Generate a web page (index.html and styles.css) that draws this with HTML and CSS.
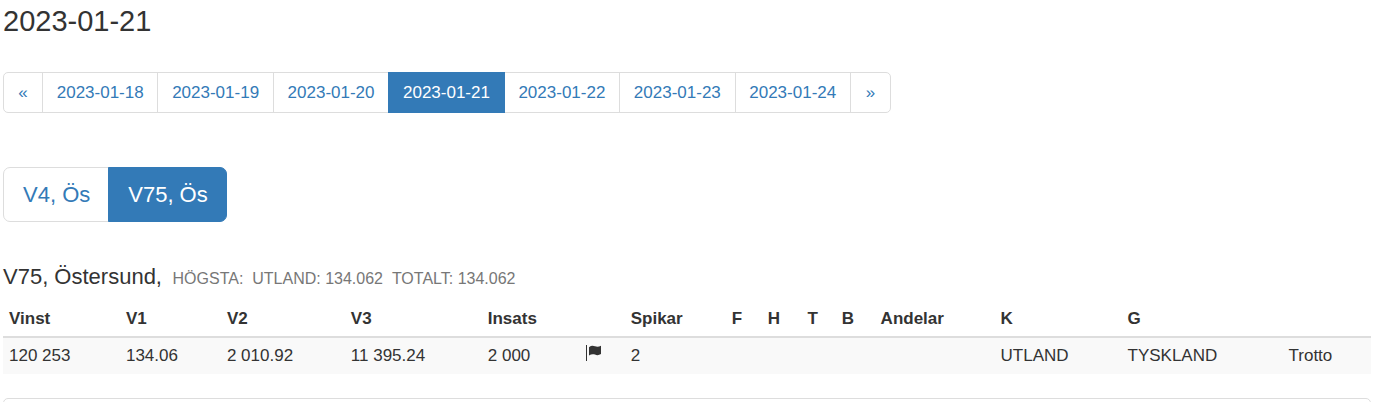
FILE: index.html
```html
<!DOCTYPE html>
<html lang="sv">
<head>
<meta charset="utf-8">
<meta name="viewport" content="width=device-width, initial-scale=1">
<title>2023-01-21</title>
<link rel="stylesheet" href="styles.css">
</head>
<body>
<main>
  <h1 class="page-title">2023-01-21</h1>

  <nav aria-label="Datum">
    <ul class="pagination days">
      <li><a href="#" aria-label="Föregående">«</a></li>
      <li><a href="#">2023-01-18</a></li>
      <li><a href="#">2023-01-19</a></li>
      <li><a href="#">2023-01-20</a></li>
      <li class="active"><a href="#" aria-current="page">2023-01-21</a></li>
      <li><a href="#">2023-01-22</a></li>
      <li><a href="#">2023-01-23</a></li>
      <li><a href="#">2023-01-24</a></li>
      <li><a href="#" aria-label="Nästa">»</a></li>
    </ul>
  </nav>

  <nav aria-label="Spel">
    <ul class="pagination games">
      <li><a href="#">V4, Ös</a></li>
      <li class="active"><a href="#" aria-current="page">V75, Ös</a></li>
    </ul>
  </nav>

  <h2 class="game-title">V75, Östersund, <small>&nbsp;HÖGSTA: &nbsp;UTLAND: 134.062 &nbsp;TOTALT: 134.062</small></h2>

  <table class="results">
    <colgroup>
      <col class="c-vinst"><col class="c-v1"><col class="c-v2"><col class="c-v3"><col class="c-insats">
      <col class="c-flag"><col class="c-spikar"><col class="c-f"><col class="c-h"><col class="c-t">
      <col class="c-b"><col class="c-andelar"><col class="c-k"><col class="c-g"><col>
    </colgroup>
    <thead>
      <tr>
        <th>Vinst</th><th>V1</th><th>V2</th><th>V3</th><th>Insats</th><th></th><th>Spikar</th>
        <th>F</th><th>H</th><th>T</th><th>B</th><th>Andelar</th><th>K</th><th>G</th><th></th>
      </tr>
    </thead>
    <tbody>
      <tr>
        <td>120 253</td><td>134.06</td><td>2 010.92</td><td>11 395.24</td><td>2 000</td>
        <td><svg class="flag" viewBox="0 0 17 17" aria-hidden="true"><path d="M0 0h1v16H0z"/><path d="M3 2.200C5 .6 7 .4 9 1.300c2 .8 4 .5 6-.5v8.200c-2 1.300-4 1.500-6 .6-2-.8-4-.5-6 1z"/></svg></td>
        <td>2</td><td></td><td></td><td></td><td></td><td></td>
        <td>UTLAND</td><td>TYSKLAND</td><td>Trotto</td>
      </tr>
    </tbody>
  </table>

  <section class="panel"></section>
</main>
</body>
</html>
```
FILE: styles.css
```css
* {
  box-sizing: border-box;
}

body {
  margin: 0;
  color: #333;
  background: #fff;
  font: 17px/24px "Liberation Sans", Arial, sans-serif;
}

main {
  padding: 5px 4px 0 3px;
}

.page-title {
  margin: 0 0 35px;
  font-size: 29px;
  font-weight: 400;
  line-height: 32px;
}

.pagination {
  display: flex;
  width: fit-content;
  margin: 0;
  padding: 0;
  list-style: none;
}

.pagination a {
  display: block;
  margin-left: -1px;
  border: 1px solid #ddd;
  color: #337ab7;
  text-align: center;
  text-decoration: none;
}

.pagination li:first-child a {
  margin-left: 0;
}

.pagination .active a {
  position: relative;
  border-color: #337ab7;
  background: #337ab7;
  color: #fff;
}

.days {
  width: 888px;
  max-width: 100%;
  margin-bottom: 54px;
}

.days li {
  flex: 1 1 116px;
}

.days li:first-child,
.days li:last-child {
  flex: 0 0 40px;
}

.days a {
  padding: 8px 0 7px;
}

.days li:first-child a {
  border-radius: 5px 0 0 5px;
}

.days li:last-child a {
  border-radius: 0 5px 5px 0;
}

.games {
  margin-bottom: 42px;
  font-size: 22px;
  line-height: 29px;
}

.games a {
  padding: 12px 18px 12px 19px;
}

.games li:first-child a {
  border-radius: 7px 0 0 7px;
}

.games li:last-child a {
  border-radius: 0 7px 7px 0;
}

.game-title {
  margin: 0 0 10px;
  font-size: 22px;
  font-weight: 400;
  line-height: 25px;
}

.game-title small {
  color: #777;
  font-size: 16px;
}

.results {
  width: 100%;
  table-layout: fixed;
  border-collapse: collapse;
}

.results th,
.results td {
  padding: 6px;
  text-align: left;
  white-space: nowrap;
}

.results th {
  padding-bottom: 5px;
}

.results thead {
  border-bottom: 2px solid #ddd;
}

.results td {
  background: #f9f9f9;
}

.c-vinst { width: 8.55%; }
.c-v1 { width: 7.38%; }
.c-v2 { width: 9.06%; }
.c-v3 { width: 10.01%; }
.c-insats { width: 7.16%; }
.c-flag { width: 3.29%; }
.c-spikar { width: 7.38%; }
.c-f { width: 2.63%; }
.c-h { width: 2.92%; }
.c-t { width: 2.49%; }
.c-b { width: 2.85%; }
.c-andelar { width: 8.77%; }
.c-k { width: 9.28%; }
.c-g { width: 11.77%; }

.flag {
  display: block;
  width: 17px;
  height: 17px;
  margin-bottom: 5px;
  fill: #333;
}

.panel {
  margin-top: 24px;
  min-height: 48px;
  border: 1px solid #ddd;
  border-radius: 5px;
}
```
